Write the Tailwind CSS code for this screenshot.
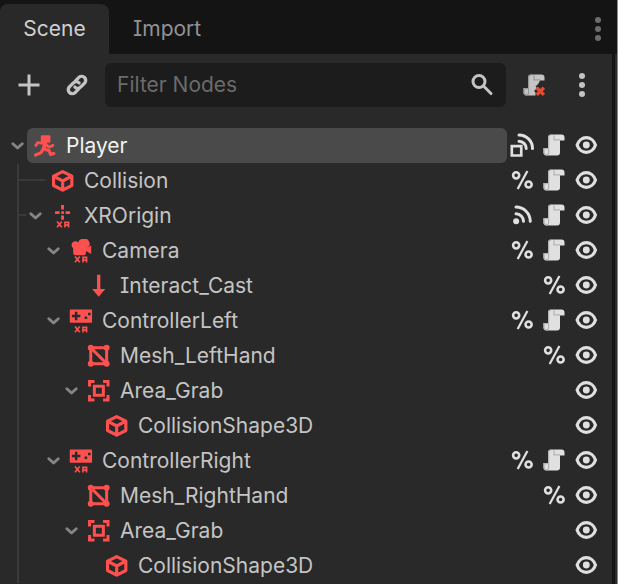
<!DOCTYPE html>
<html lang="en">
<head>
    <meta charset="UTF-8">
    <meta name="viewport" content="width=device-width, initial-scale=1.0">
    <title>Scene</title>
    <script src="https://cdn.jsdelivr.net/npm/@tailwindcss/browser@4"></script>
</head>
<body class="min-h-screen flex bg-[#141414] overflow-hidden border-r border-[#8c8c8c] font-['Inter',sans-serif] [font-feature-settings:'cv08'] text-[21px] leading-[35px] text-[#c4c4c4]">
    <!-- Icon sprite, 16x16 grid -->
    <svg class="hidden">
        <symbol id="add" viewBox="0 0 16 16"><path fill="none" stroke="currentColor" stroke-width="2" d="M8 1v14M1 8h14"/></symbol>
        <symbol id="link" viewBox="0 0 16 16">
            <g fill="none" stroke="currentColor" stroke-width="2.200" stroke-linecap="round">
                <path d="M7 5.200 9.400 2.800a2.700 2.700 0 0 1 3.800 3.800L10.400 9.400a2.700 2.700 0 0 1-3.800 0"/>
                <path d="M9 10.800 6.600 13.200a2.700 2.700 0 0 1-3.800-3.800L5.600 6.600a2.700 2.700 0 0 1 3.800 0"/>
            </g>
        </symbol>
        <symbol id="search" viewBox="0 0 16 16"><g fill="none" stroke="currentColor" stroke-width="2"><circle cx="6" cy="5.700" r="4"/><path d="m9 8.700 5 5" stroke-linecap="round"/></g></symbol>
        <symbol id="dots" viewBox="0 0 16 16"><g fill="currentColor"><circle cx="8" cy="2" r="2"/><circle cx="8" cy="8" r="2"/><circle cx="8" cy="14" r="2"/></g></symbol>
        <symbol id="script" viewBox="0 0 16 16">
            <path fill="#e0e0e0" d="M6 1a2 2 0 0 0-2 2v7H1v3a2 2 0 0 0 2 2h7a2 2 0 0 0 2-2V5h3V3a2 2 0 0 0-2-2z"/>
            <path fill="none" stroke="#b4b4b4" stroke-width=".8" d="M6 1.400A1.600 1.600 0 0 0 4.400 3v10A1.400 1.400 0 0 1 3 14.600 1.600 1.600 0 0 1 1.400 13v-2.600H4M8 1.500V4.600H12"/>
        </symbol>
        <symbol id="script-remove" viewBox="0 0 16 16">
            <path fill="#c4c4c4" d="M6 1a2 2 0 0 0-2 2v7H1v3a2 2 0 0 0 2 2h6V13L8 12l2-2-1-1 2-2 1-2h3V3a2 2 0 0 0-2-2z"/>
            <path fill="none" stroke="#999" stroke-width=".8" d="M6 1.400A1.600 1.600 0 0 0 4.400 3v10A1.400 1.400 0 0 1 3 14.600 1.600 1.600 0 0 1 1.400 13v-2.600H4M8 1.500V4.600H12"/>
            <path stroke="#e8492f" stroke-width="2.300" d="m9.800 9.800 4.800 4.800m0-4.800L9.800 14.600"/>
        </symbol>
        <symbol id="eye" viewBox="0 0 16 16">
            <path fill="none" stroke="currentColor" stroke-width="2.100" d="M2.100 8c.9-3 3.400-4.900 6.100-4.900S13.400 5 14.300 8c-.9 3-3.400 4.900-6.100 4.900S3 11 2.100 8z"/>
            <circle cx="8.200" cy="8" r="2.300" fill="currentColor"/>
        </symbol>
        <symbol id="unique" viewBox="0 0 16 16">
            <g fill="none" stroke="currentColor"><circle cx="4.100" cy="4.900" r="2.050" stroke-width="1.700"/><circle cx="12.400" cy="11" r="2.050" stroke-width="1.700"/><path stroke-width="1.500" d="M11.600 2 5.100 14"/></g>
        </symbol>
        <symbol id="signals" viewBox="0 0 16 16">
            <circle cx="4.100" cy="12.200" r="2" fill="currentColor"/>
            <path fill="none" stroke="currentColor" stroke-width="2" stroke-linecap="round" d="M4 7.200a5 5 0 0 1 5 5M4 2.700a9.500 9.500 0 0 1 9.500 9.500"/>
        </symbol>
        <symbol id="signals-group" viewBox="0 0 16 16">
            <path fill="none" stroke="currentColor" stroke-width="1.800" d="M1.200 8.700h6.300v6.300H1.200z"/>
            <path fill="none" stroke="currentColor" stroke-width="2" stroke-linecap="round" d="M6 5.500a4.800 4.800 0 0 1 4.800 4.800M6 1.300a9 9 0 0 1 9 9"/>
        </symbol>
        <symbol id="chevron" viewBox="0 0 16 16"><path fill="none" stroke="currentColor" stroke-width="2.600" stroke-linecap="round" stroke-linejoin="round" d="m3.400 6 4.200 3.800L11.800 6"/></symbol>
        <symbol id="character" viewBox="0 0 16 16">
            <path fill="currentColor" d="M6 .8h4.800q.8 0 .8.800v3.400q0 .8-.8.800H6q-.8 0-.8-.8V1.600q0-.8.800-.8z"/>
            <path fill="none" stroke="currentColor" stroke-width="1.900" stroke-linecap="round" stroke-linejoin="round" d="M1.900 7.600 3.200 5.700 8 6.400l2.700 2.400 2.600-1.200"/>
            <path fill="none" stroke="currentColor" stroke-width="2.500" stroke-linecap="round" d="M8.200 6.500 7 9.800"/>
            <path fill="none" stroke="currentColor" stroke-width="2.100" stroke-linecap="round" stroke-linejoin="round" d="M7 9.800 5.200 12.600 1.700 14M7.400 9.900l3.300 1.200 1 2.500 2.200-.6"/>
        </symbol>
        <symbol id="cube" viewBox="0 0 16 16"><path fill="none" stroke="currentColor" stroke-width="2.100" stroke-linejoin="round" d="m7.800 1.700 6.100 3.100v6.200l-6.100 3.100-6.100-3.100V4.800zM1.700 4.800l6.100 3.200 6.100-3.200M7.800 8v6"/></symbol>
        <symbol id="xr" viewBox="0 0 16 16"><path fill="none" stroke="currentColor" stroke-width="1.100" d="m4 11.600 3.200 3.900m0-3.900L4 15.500M9.300 15.600v-3.400h2.400v1.900H9.300M11.700 14v1.600"/></symbol>
        <symbol id="xr-origin" viewBox="0 0 16 16">
            <path fill="none" stroke="currentColor" stroke-width="1.900" d="M7.700.6v3M7.700 7.700v2.800M2.700 5.700h3M9.700 5.700h3M6.800 5.700h1.800"/><use href="#xr"/>
        </symbol>
        <symbol id="xr-camera" viewBox="0 0 16 16">
            <path fill="currentColor" d="M9.300 0a3 3 0 0 0-3.100 2.300A2.600 2.600 0 1 0 2.800 6.200V9q0 1.800 1.500 1.800h5.500Q11.300 10.800 11.300 9V8l3.500 2V4.200L12 6A3.300 3.300 0 0 0 9.300 0z"/><use href="#xr"/>
        </symbol>
        <symbol id="xr-controller" viewBox="0 0 16 16">
            <path fill="currentColor" fill-rule="evenodd" d="M1.100.3h13.700q.6 0 .6.700v7.500q0 .7-.6.700H1.100q-.6 0-.6-.7V1q0-.7.600-.7zM3.900 1.800v2H1.900v1.700h2v2h1.700v-2h2V3.800h-2v-2zM12.700 2.500v1.700h1.700V2.500zM10.400 5v1.700h1.700V5z"/><use href="#xr"/>
        </symbol>
        <symbol id="raycast" viewBox="0 0 16 16"><path fill="currentColor" d="M6.700.5h2.200V10h3.300L7.800 15.200 3.400 10h3.300z"/></symbol>
        <symbol id="mesh" viewBox="0 0 16 16">
            <path fill="none" stroke="currentColor" stroke-width="2" d="M2.500 2.500h10.600v10.600H2.500zL13.100 13.100"/>
            <g fill="currentColor"><circle cx="2.500" cy="2.500" r="2"/><circle cx="13.100" cy="2.500" r="2"/><circle cx="2.500" cy="13.100" r="2"/><circle cx="13.100" cy="13.100" r="2"/></g>
        </symbol>
        <symbol id="area" viewBox="0 0 16 16"><path fill="none" stroke="currentColor" stroke-width="2" d="M1.700 5V1.700H5M10.700 1.700H14V5M14 10.700V14h-3.300M5 14H1.700v-3.300M4.900 4.900h6v6h-6z"/></symbol>
    </svg>

    <main class="flex-1 min-w-0 flex flex-col">
        <header class="h-[54px] shrink-0 flex items-end pt-1">
            <div role="tablist" class="flex h-full flex-1">
                <button role="tab" aria-selected="true" class="w-[109px] pb-0.5 rounded-t-lg bg-[#292929] text-[#d0d0d0]">Scene</button>
                <button role="tab" aria-selected="false" class="px-6 pb-0.5 text-[#929292]">Import</button>
            </div>
            <button aria-label="Dock options" class="self-center pr-[7px] text-[#6c6c6c]"><svg class="size-6"><use href="#dots"/></svg></button>
        </header>

        <div class="flex-1 flex">
            <section class="flex-1 bg-[#292929] pt-[9px]">
                <div class="flex items-center pl-[17px] pr-[18px]">
                    <button aria-label="Add child node"><svg class="size-6"><use href="#add"/></svg></button>
                    <button aria-label="Instantiate child scene" class="ml-6"><svg class="size-6"><use href="#link"/></svg></button>
                    <label class="ml-4 h-11 flex-1 min-w-0 flex items-center rounded-md bg-[#1c1c1c] px-3">
                        <input type="text" aria-label="Filter nodes" placeholder="Filter Nodes" class="flex-1 min-w-0 pb-0.5 outline-none placeholder:text-[#6b6b6b]">
                        <svg class="size-6"><use href="#search"/></svg>
                    </label>
                    <button aria-label="Detach script" class="ml-4"><svg class="size-6"><use href="#script-remove"/></svg></button>
                    <button aria-label="More options" class="ml-6"><svg class="size-6"><use href="#dots"/></svg></button>
                </div>

                <div class="relative mt-[21px]">
                    <!-- Guide lines of the root's children -->
                    <div class="absolute left-[17px] top-9 bottom-0 w-0.5 bg-[#3a3a3a]"></div>
                    <div class="absolute left-[17px] top-[51px] h-0.5 w-7 bg-[#3a3a3a]"></div>
                    <div class="absolute left-[17px] top-[86px] h-0.5 w-[9px] bg-[#3a3a3a]"></div>
                    <ul id="tree" role="tree" class="relative"></ul>
                </div>
            </section>
            <div class="w-0.5 ml-[3px] bg-[#292929]"></div>
        </div>
    </main>

    <script>
        const nodes = [
            { name: 'Player', icon: 'character', depth: 0, open: true, selected: true, actions: ['signals-group', 'script', 'eye'] },
            { name: 'Collision', icon: 'cube', depth: 1, actions: ['unique', 'script', 'eye'] },
            { name: 'XROrigin', icon: 'xr-origin', depth: 1, open: true, actions: ['signals', 'script', 'eye'] },
            { name: 'Camera', icon: 'xr-camera', depth: 2, open: true, actions: ['unique', 'script', 'eye'] },
            { name: 'Interact_Cast', icon: 'raycast', depth: 3, actions: ['unique', 'eye'] },
            { name: 'ControllerLeft', icon: 'xr-controller', depth: 2, open: true, actions: ['unique', 'script', 'eye'] },
            { name: 'Mesh_LeftHand', icon: 'mesh', depth: 3, actions: ['unique', 'eye'] },
            { name: 'Area_Grab', icon: 'area', depth: 3, open: true, actions: ['eye'] },
            { name: 'CollisionShape3D', icon: 'cube', depth: 4, actions: ['eye'] },
            { name: 'ControllerRight', icon: 'xr-controller', depth: 2, open: true, actions: ['unique', 'script', 'eye'] },
            { name: 'Mesh_RightHand', icon: 'mesh', depth: 3, actions: ['unique', 'eye'] },
            { name: 'Area_Grab', icon: 'area', depth: 3, open: true, actions: ['eye'] },
            { name: 'CollisionShape3D', icon: 'cube', depth: 4, actions: ['eye'] },
        ];

        const labels = { 'signals-group': 'Signals and groups', signals: 'Signals', unique: 'Unique name', script: 'Open script', eye: 'Toggle visibility' };

        document.getElementById('tree').innerHTML = nodes.map(node => `
            <li role="treeitem" class="flex h-[35px] items-center pl-[9px]">
                <div class="flex shrink-0 justify-end" style="width: ${18 + node.depth * 18}px">
                    ${node.open ? '<button aria-label="Collapse" class="text-[#858585]"><svg class="size-[18px]"><use href="#chevron"/></svg></button>' : ''}
                </div>
                <div class="flex h-full flex-1 min-w-0 items-center gap-[9px] rounded-md pl-1.5 ${node.selected ? 'bg-[#4a4a4a] text-[#f2f2f2]' : ''}">
                    <svg class="size-6 shrink-0 text-[#ff5050]"><use href="#${node.icon}"/></svg>
                    <span>${node.name}</span>
                </div>
                <div class="flex gap-2 pl-[3px] pr-3.5 pb-px text-[#e0e0e0]">
                    ${node.actions.map(a => `<button aria-label="${labels[a]}"><svg class="size-6"><use href="#${a}"/></svg></button>`).join('')}
                </div>
            </li>`).join('');
    </script>
</body>
</html>
